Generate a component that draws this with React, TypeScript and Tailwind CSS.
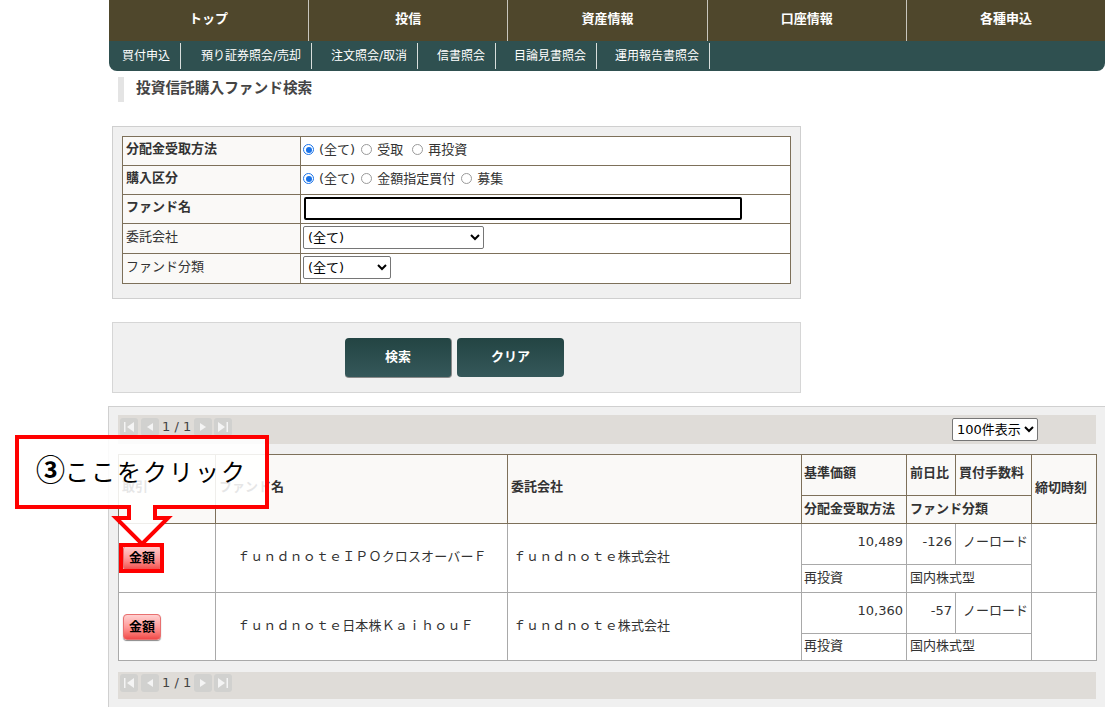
const font = { fontFamily: '"DejaVu Sans", "Noto Sans CJK JP", sans-serif' };

const top = ["トップ", "投信", "資産情報", "口座情報", "各種申込"];
const sub = ["買付申込", "預り証券照会/売却", "注文照会/取消", "信書照会", "目論見書照会", "運用報告書照会"];
const subW = ["w-[72px]", "w-[131px]", "w-[106px]", "w-[78px]", "w-[101px]", "w-[113px]"];

function Radio({ on }: { on?: boolean }) {
  return (
    <span className={on
      ? "inline-block w-[11px] h-[11px] rounded-full border border-[#1a73e8] bg-white mr-[5px] p-[1.5px]"
      : "inline-block w-[11px] h-[11px] rounded-full border border-[#9a9a9a] bg-white mr-[5px]"}>
      {on && <span className="block w-full h-full rounded-full bg-[#1a73e8]" />}
    </span>
  );
}

function FormRow({ label, h, bold, pb, children }: { label: string; h: string; bold?: boolean; pb: string; children: React.ReactNode }) {
  return (
    <tr className={h}>
      <td className={`border border-[#7d705a] bg-[#faf9f7] w-[178px] px-[3px] pb-[4px] text-[13px] text-[#333] ${bold ? "font-bold" : ""}`}>{label}</td>
      <td className={`border border-[#7d705a] bg-white px-[2px] ${pb} text-[13px] text-[#333]`}>{children}</td>
    </tr>
  );
}

function Sel({ w, label }: { w: string; label: string }) {
  return (
    <select className={`${w} h-[23px] block border border-[#767676] rounded-[2px] bg-white text-[13px] text-black appearance-auto`} style={font}>
      <option>{label}</option>
    </select>
  );
}

function PagerBtn({ d }: { d: React.ReactNode }) {
  return (
    <span className="w-[18px] h-[18px] rounded-[3px] bg-[#d1d1cf] flex items-center justify-center">
      <svg width="14" height="14" viewBox="0 0 14 14" fill="#f4f4f4">{d}</svg>
    </span>
  );
}

function Pager({ h, pt, right }: { h: string; pt: string; right?: boolean }) {
  return (
    <div className={`${h} ${pt} bg-[#dfdcd8] flex items-start justify-between pl-[2px] pr-[58px]`}>
      <div className="flex items-center h-[18px] text-[13px] text-[#444]">
        <PagerBtn d={<><rect x="2" y="2" width="1.5" height="10" /><path d="M12 2v10L5 7z" /></>} />
        <span className="ml-[3px]"><PagerBtn d={<path d="M10 3v8L4 7z" />} /></span>
        <span className="ml-[3px] w-[32px] whitespace-nowrap">1 / 1</span>
        <PagerBtn d={<path d="M4 3v8l6-4z" />} />
        <span className="ml-[2px]"><PagerBtn d={<><rect x="10.5" y="2" width="1.5" height="10" /><path d="M2 2v10l7-5z" /></>} /></span>
      </div>
      {right && <Sel w="w-[86px]" label="100件表示" />}
    </div>
  );
}

const th = "border border-[#7d705a] bg-[#faf9f7] text-[13px] font-bold text-[#333] text-left px-[3px]";
const td = "border border-[#a9a9a9] bg-white text-[13px] text-[#333] px-[3px]";

function KinBtn() {
  return (
    <span className="inline-block w-[38px] h-[26px] leading-[24px] text-center rounded-[4px] text-[13px] font-bold text-black bg-gradient-to-b from-[#ffd0d0] via-[#ff9a9a] to-[#f04848] border border-[#e87070] shadow-[0_1px_1px_#888]">金額</span>
  );
}

function Fund({ name, price, diff, sub2 }: { name: string; price: string; diff: string; sub2: string }) {
  return (
    <>
      <tr className="h-[41px]">
        <td rowSpan={2} className={`${td} pl-[4px]`}><KinBtn /></td>
        <td rowSpan={2} className={`${td} pl-[21px] pb-[2px] tracking-[0.15px] whitespace-nowrap`}>{name}</td>
        <td rowSpan={2} className={`${td} pl-[5px] pb-[2px] tracking-[0.1px]`}>ｆｕｎｄｎｏｔｅ株式会社</td>
        <td className={`${td} text-right pb-[4px]`}>{price}</td>
        <td className={`${td} text-right pb-[4px]`}>{diff}</td>
        <td className={`${td} text-right pb-[4px] px-[2px]`}>ノーロード</td>
        <td rowSpan={2} className={td}></td>
      </tr>
      <tr className={sub2}>
        <td className={`${td} pb-[2px] pl-[2px]`}>再投資</td>
        <td colSpan={2} className={`${td} pb-[2px]`}>国内株式型</td>
      </tr>
    </>
  );
}

export default function App() {
  return (
    <div className="relative w-[1105px] h-[707px] overflow-hidden bg-white" style={font}>
      <div className="ml-[109px] w-[996px]">
        <nav className="h-[41px] bg-[#4f472c] grid grid-cols-5">
          {top.map((t, i) => (
            <div key={t} className={`flex items-center justify-center pb-[3px] text-[13px] font-bold text-white ${i > 0 ? "border-l border-[#c8c6bd]" : ""}`}>{t}</div>
          ))}
        </nav>
        <div className="h-[30px] bg-[#2f5050] rounded-bl-[8px] rounded-br-[8px] flex items-center">
          {sub.map((t, i) => (
            <div key={t} className={`${subW[i]} h-[26px] flex items-center justify-end pr-[10px] pb-[1px] text-[12px] text-white border-r border-[#d8dedc] whitespace-nowrap`}>{t}</div>
          ))}
        </div>
        <div className="mt-[6px] ml-[9px] h-[25px] border-l-[6px] border-[#e4e4e4] pl-[12px] text-[14.7px] font-bold text-[#444] leading-[22px]">投資信託購入ファンド検索</div>
      </div>

      <div className="ml-[112px] mt-[24px] w-[689px] h-[173px] bg-[#f0f0f0] border border-[#cfcfcf] pt-[9px] pl-[9px]">
        <table className="w-[669px] border-collapse table-fixed">
          <tbody>
            <FormRow label="分配金受取方法" h="h-[29px]" bold pb="pb-[3px]">
              <span className="flex items-center"><Radio on />(全て)<span className="w-[6px]" /><Radio />受取<span className="w-[9px]" /><Radio />再投資</span>
            </FormRow>
            <FormRow label="購入区分" h="h-[29px]" bold pb="pb-[3px]">
              <span className="flex items-center"><Radio on />(全て)<span className="w-[6px]" /><Radio />金額指定買付<span className="w-[6px]" /><Radio />募集</span>
            </FormRow>
            <FormRow label="ファンド名" h="h-[29px]" bold pb="pb-[2px]">
              <input className="block w-[438px] h-[23px] border-2 border-black rounded-[2px] bg-white ml-[1px]" />
            </FormRow>
            <FormRow label="委託会社" h="h-[30px]" pb="pb-[2px]">
              <Sel w="w-[181px]" label="(全て)" />
            </FormRow>
            <FormRow label="ファンド分類" h="h-[30px]" pb="pb-[2px]">
              <Sel w="w-[88px]" label="(全て)" />
            </FormRow>
          </tbody>
        </table>
      </div>

      <div className="ml-[112px] mt-[23px] w-[689px] h-[71px] bg-[#f0f0f0] border-y border-x border-[#d6d6d6] flex items-start justify-start pt-[15px] pl-[232px] gap-[5px]">
        <button className="w-[107px] h-[40px] pb-[2px] rounded-[4px] bg-gradient-to-b from-[#234443] to-[#35585a] text-white text-[13px] font-bold border-r border-b border-[#8a8a8a]">検索</button>
        <button className="w-[107px] h-[39px] pb-[2px] rounded-[4px] bg-gradient-to-b from-[#234443] to-[#35585a] text-white text-[13px] font-bold">クリア</button>
      </div>

      <div className="ml-[108px] mt-[13px] w-[997px] h-[301px] bg-[#f0f0f0] border-t border-l border-[#d0d0d0] pt-[8px] pl-[9px] pr-[9px]">
        <Pager h="h-[29px]" pt="pt-[3px]" right />
        <table className="mt-[10px] w-[978px] border-collapse table-fixed">
          <colgroup>
            <col className="w-[97px]" /><col className="w-[292px]" /><col className="w-[294px]" />
            <col className="w-[105px]" /><col className="w-[49px]" /><col className="w-[76px]" /><col className="w-[65px]" />
          </colgroup>
          <thead>
            <tr className="h-[41px]">
              <th rowSpan={2} className={`${th} pb-[4px]`}>取引</th>
              <th rowSpan={2} className={`${th} pb-[4px]`}>ファンド名</th>
              <th rowSpan={2} className={`${th} pb-[4px]`}>委託会社</th>
              <th className={`${th} pb-[4px] pl-[2px]`}>基準価額</th>
              <th className={`${th} pb-[4px]`}>前日比</th>
              <th className={`${th} pb-[4px] whitespace-nowrap`}>買付手数料</th>
              <th rowSpan={2} className={`${th} pb-[2px]`}>締切時刻</th>
            </tr>
            <tr className="h-[28px]">
              <th className={`${th} pb-[2px] pl-[2px] whitespace-nowrap`}>分配金受取方法</th>
              <th colSpan={2} className={`${th} pb-[2px]`}>ファンド分類</th>
            </tr>
          </thead>
          <tbody>
            <Fund name="ｆｕｎｄｎｏｔｅＩＰＯクロスオーバーＦ" price="10,489" diff="-126" sub2="h-[28px]" />
            <Fund name="ｆｕｎｄｎｏｔｅ日本株ＫａｉｈｏｕＦ" price="10,360" diff="-57" sub2="h-[27px]" />
          </tbody>
        </table>
        <div className="mt-[11px]"><Pager h="h-[27px]" pt="pt-[2px]" /></div>
      </div>

      <svg className="absolute left-0 top-0 pointer-events-none" width="300" height="580" viewBox="0 0 300 580">
        <path d="M17 437H267V507H155V518H168L142 544L116 518H129V507H17Z" fill="rgba(255,255,255,0.88)" stroke="#f00" strokeWidth="4" />
      </svg>
      <div className="absolute left-[36px] top-[455px] text-[24px] leading-[32px] tracking-[2px] text-black" style={{ fontFamily: '"Liberation Serif", "Noto Sans CJK JP", serif' }}><span className="text-[29px] font-bold leading-[32px] tracking-[0px]">③</span>ここをクリック</div>
      <div className="absolute left-[119px] top-[543px] w-[45px] h-[30px] border-[4px] border-[#f00]" />
    </div>
  );
}
